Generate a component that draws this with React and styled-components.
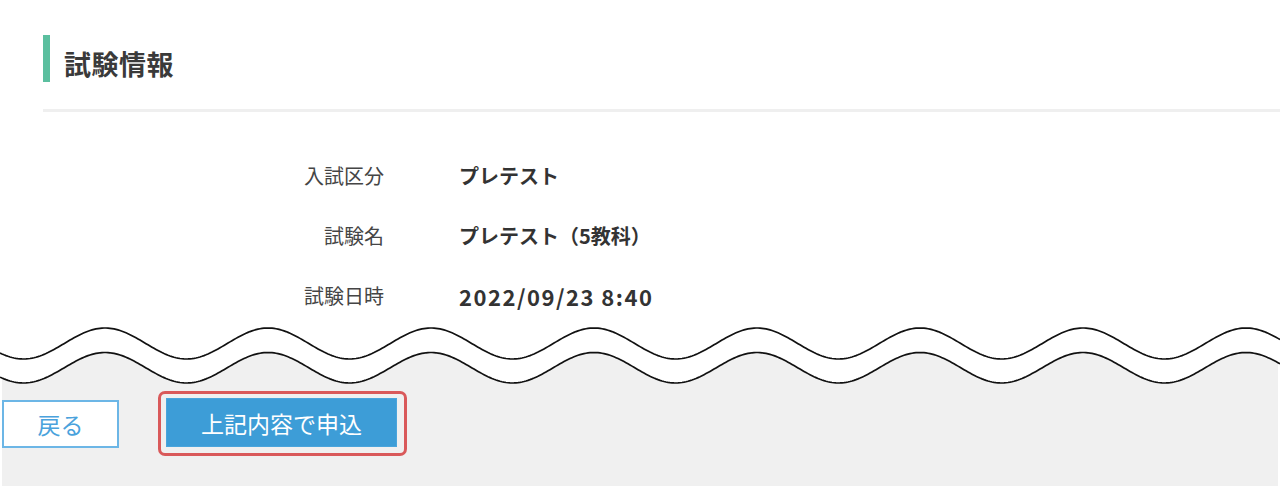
import React from "react";
import styled, { createGlobalStyle } from "styled-components";

const Global = createGlobalStyle`
  html, body { margin: 0; padding: 0; background: #ffffff; }
  body { font-family: "Noto Sans CJK JP", "Noto Sans", sans-serif; color: #333; }
  * { box-sizing: border-box; }
`;

const Page = styled.div`
  width: 1280px;
  height: 486px;
  overflow: hidden;
  display: flex;
  flex-direction: column;
`;

const Heading = styled.h2`
  margin: 35px 0 0 43px;
  padding: 10px 0 0 14px;
  border-left: 7px solid #5bbf9f;
  font-size: 27px;
  line-height: 37px;
  font-weight: 700;
  color: #3a3a3a;
  letter-spacing: 0.5px;
`;

const Divider = styled.hr`
  margin: 27px 0 0 43px;
  border: 0;
  height: 3px;
  background: #efefef;
`;

const InfoGrid = styled.dl`
  margin: 34px 0 0 0;
  display: grid;
  grid-template-columns: 384px 1fr;
  column-gap: 75px;
  grid-auto-rows: 60px;
  align-items: center;
`;

const Label = styled.dt`
  margin: 0;
  text-align: right;
  font-size: 20px;
  line-height: 60px;
  color: #454545;
`;

const Value = styled.dd`
  margin: 0;
  font-size: ${(p) => (p.$numeric ? "22px" : "20px")};
  line-height: 60px;
  font-weight: 700;
  color: #333;
  letter-spacing: ${(p) => (p.$numeric ? "1.5px" : "0")};
`;

const WaveSvg = styled.svg`
  display: block;
  width: 1280px;
  height: 64px;
  flex: none;
`;

const Footer = styled.div`
  flex: 1;
  margin: 0 2px;
  padding-top: 1px;
  background: #f0f0f0;
  display: flex;
  align-items: flex-start;
`;

const ButtonRow = styled.div`
  display: flex;
  align-items: center;
  gap: 39px;
  height: 65px;
`;

const BackButton = styled.button`
  width: 117px;
  height: 48px;
  background: #ffffff;
  border: 2px solid #6cb6e6;
  color: #4aa2dc;
  font-family: inherit;
  font-size: 23px;
  padding: 0;
  cursor: pointer;
`;

const Highlight = styled.div`
  border: 3px solid #d9595a;
  border-radius: 7px;
  padding: 4px 7px 6px 5px;
`;

const SubmitButton = styled.button`
  display: block;
  width: 231px;
  height: 49px;
  background: #3d9dd7;
  border: 1px solid #4aa5dc;
  color: #ffffff;
  font-family: inherit;
  font-size: 23px;
  padding: 0;
  cursor: pointer;
`;

const rows = [
  { label: "入試区分", value: "プレテスト" },
  { label: "試験名", value: "プレテスト（5教科）" },
  { label: "試験日時", value: "2022/09/23 8:40", numeric: true },
];

function wavePoints(mid, amp, from, to) {
  const pts = [];
  for (let x = from; x <= to; x += 2) {
    const y = mid - amp * Math.cos((2 * Math.PI * (x - 105)) / 163);
    pts.push(`${x},${y.toFixed(2)}`);
  }
  return pts;
}

function Wave() {
  const upper = wavePoints(17.5, 15.5, 0, 1280);
  const lower = wavePoints(41.75, 15.25, 0, 1280);
  const fill = wavePoints(41.75, 15.25, 2, 1278);
  return (
    <WaveSvg viewBox="0 0 1280 64" preserveAspectRatio="none">
      <path d={`M${fill.join(" L")} L1278,64 L2,64 Z`} fill="#f0f0f0" />
      <path d={`M${upper.join(" L")}`} fill="none" stroke="#111" strokeWidth="1.7" />
      <path d={`M${lower.join(" L")}`} fill="none" stroke="#111" strokeWidth="1.7" />
    </WaveSvg>
  );
}

export default function App() {
  return (
    <>
      <Global />
      <Page>
        <Heading>試験情報</Heading>
        <Divider />
        <InfoGrid>
          {rows.map((r) => (
            <React.Fragment key={r.label}>
              <Label>{r.label}</Label>
              <Value $numeric={r.numeric}>{r.value}</Value>
            </React.Fragment>
          ))}
        </InfoGrid>
        <Wave />
        <Footer>
          <ButtonRow>
            <BackButton>戻る</BackButton>
            <Highlight>
              <SubmitButton>上記内容で申込</SubmitButton>
            </Highlight>
          </ButtonRow>
        </Footer>
      </Page>
    </>
  );
}
